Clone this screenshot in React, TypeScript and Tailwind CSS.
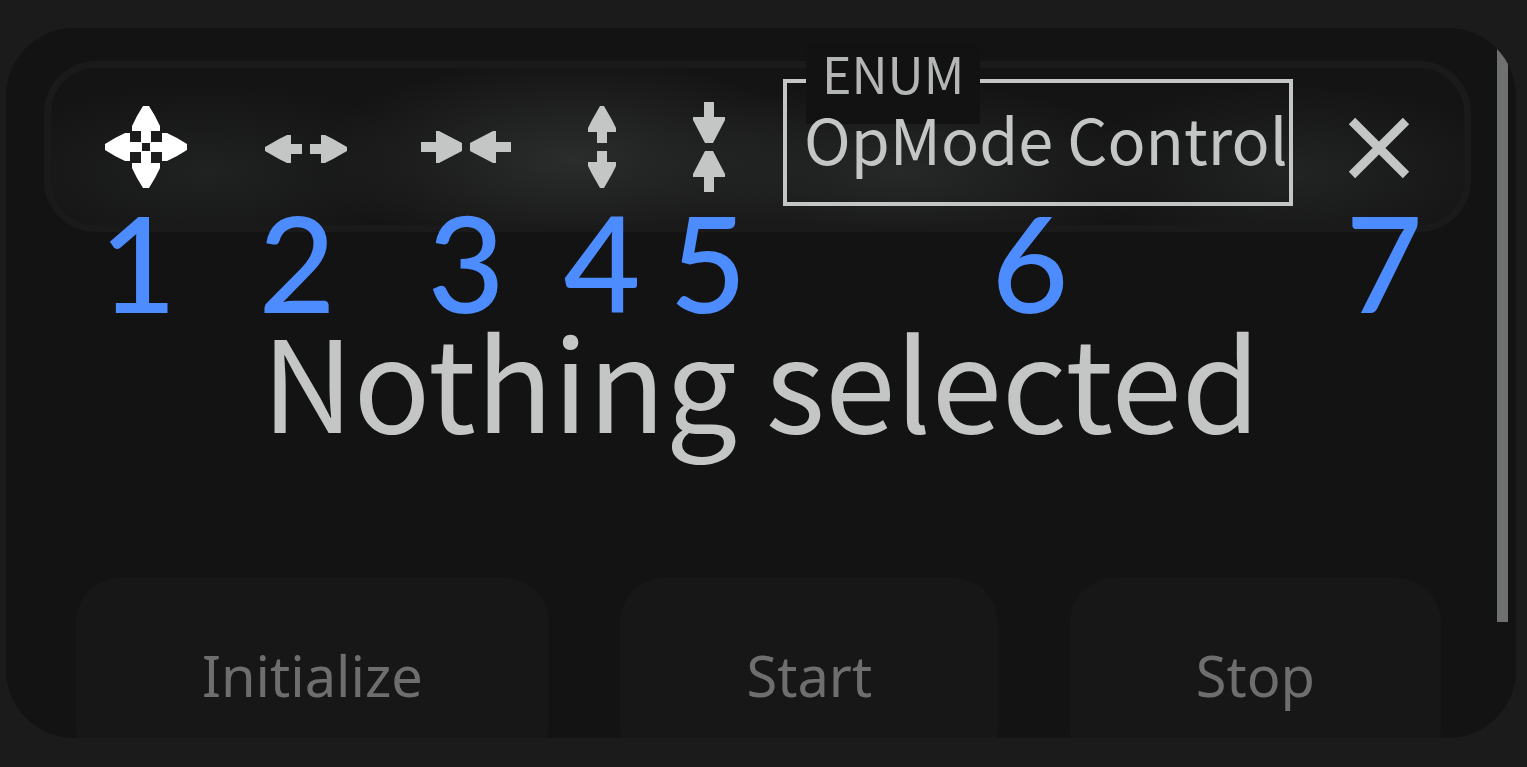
import { useState } from "react";
import type { ReactNode } from "react";

const numbers = [1, 2, 3, 4, 5, 6, 7];
const actions = ["Initialize", "Start", "Stop"];

function ToolButton({ label, active, children }: { label: string; active?: boolean; children: ReactNode }) {
  return (
    <button
      type="button"
      aria-label={label}
      className={active ? "justify-self-center text-white" : "justify-self-center text-[#c4c6c5]"}
    >
      <svg width="92" height="92" viewBox="-46 -46 92 92" fill="currentColor" aria-hidden="true">
        {children}
      </svg>
    </button>
  );
}

const moveArrow = "M-3 -41H3L9 -31L14 -21V-16H5V-4H-5V-16H-14V-21L-9 -31Z";
const outArrow = "M-2 -41H2L10 -27L14 -19V-15H5V-4H-5V-15H-14V-19L-10 -27Z";
const inArrow = "M-5 -45H5V-30H16V-27L4 -4H-4L-16 -27V-30H-5Z";

export default function App() {
  const [name, setName] = useState("OpMode Control");

  return (
    <div className="flex h-screen flex-col bg-[#1b1b1b] pt-7 pr-[11px] pb-[29px] pl-[6px] font-['Noto_Sans_CJK_SC',sans-serif]">
      <main className="relative min-h-0 flex-1 overflow-hidden rounded-[68px] bg-[#131313]">
        <div
          role="toolbar"
          aria-label="Layout tools"
          className="mt-[33px] mr-[45px] ml-[38px] grid grid-cols-[160fr_160fr_160fr_112fr_102fr_556fr_126fr] items-center rounded-[52px] border-[7px] border-[#1a1a1a] bg-[#141414] bg-[radial-gradient(ellipse_220px_90px_at_11%_66%,#202121,transparent),radial-gradient(ellipse_260px_100px_at_37%_58%,#2b2c2c,transparent),radial-gradient(ellipse_260px_90px_at_60%_66%,#272828,transparent),radial-gradient(ellipse_220px_90px_at_88%_66%,#222323,transparent)] py-[11px] pr-[22px] pl-[15px]"
        >
          <ToolButton label="Move" active>
            <path d={moveArrow} />
            <path d={moveArrow} transform="rotate(90)" />
            <path d={moveArrow} transform="rotate(180)" />
            <path d={moveArrow} transform="rotate(270)" />
          </ToolButton>
          <ToolButton label="Expand horizontally">
            <g transform="translate(0 2)">
              <path d={outArrow} transform="rotate(90)" />
              <path d={outArrow} transform="rotate(270)" />
            </g>
          </ToolButton>
          <ToolButton label="Shrink horizontally">
            <path d={inArrow} transform="rotate(90)" />
            <path d={inArrow} transform="rotate(270)" />
          </ToolButton>
          <ToolButton label="Expand vertically">
            <path d={outArrow} />
            <path d={outArrow} transform="rotate(180)" />
          </ToolButton>
          <ToolButton label="Shrink vertically">
            <path d={inArrow} />
            <path d={inArrow} transform="rotate(180)" />
          </ToolButton>
          <div className="relative mx-[23px] mb-2 border-4 border-[#c4c6c5] pb-[11px] pl-[17px]">
            <label
              htmlFor="mode"
              className="absolute -top-10 left-[19px] bg-[#121212] px-4 pb-[23px] text-[50px] leading-[58px] text-[#b4b6b5]"
            >
              ENUM
            </label>
            <input
              id="mode"
              value={name}
              onChange={(event) => setName(event.target.value)}
              className="relative block h-[108px] w-full bg-transparent text-[63px] text-[#c4c6c5] outline-none"
            />
          </div>
          <ToolButton label="Close">
            <path d="M-27 -26L27 28M27 -26L-27 28" fill="none" stroke="currentColor" strokeWidth="9" />
          </ToolButton>
        </div>

        <div className="relative -mt-[18px] mr-[42px] ml-[54px] grid grid-cols-[156fr_162fr_176fr_96fr_116fr_528fr_180fr] font-['Lato',sans-serif] text-[133px] leading-[96px] font-medium text-[#4d8cff]">
          {numbers.map((number) => (
            <span key={number} className="flex justify-center">
              {number}
            </span>
          ))}
        </div>

        <h1 className="mt-1 text-center text-[127px] leading-[128px] text-[#c4c6c5]">Nothing selected</h1>

        <div className="mt-[136px] flex justify-between pr-[75px] pl-[70px] font-['Noto_Sans',sans-serif]">
          {actions.map((action) => (
            <button
              key={action}
              type="button"
              className="rounded-[44px] bg-[#171717] px-[126px] py-[60px] text-[56px] leading-[74px] text-[#6e6e6e]"
            >
              {action}
            </button>
          ))}
        </div>

        <div className="absolute top-0 right-2 h-[594px] w-[11px] bg-[#6f7170]" />
      </main>
    </div>
  );
}
